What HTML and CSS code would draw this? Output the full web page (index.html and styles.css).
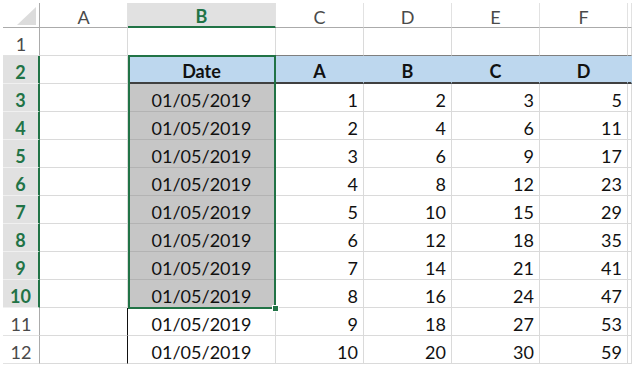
FILE: index.html
```html
<!DOCTYPE html>
<html lang="en">
<head>
    <meta charset="UTF-8">
    <title>Sheet</title>
    <link rel="stylesheet" href="styles.css">
</head>
<body>

<div class="sheet">
  <!-- column headers -->
  <div class="cell corner">
    <svg width="19" height="18" viewBox="0 0 19 18"><polygon points="19,0 19,18 0,18" fill="#dcdcdc"/></svg>
  </div>
  <div class="cell col-head">A</div>
  <div class="cell col-head active">B</div>
  <div class="cell col-head">C</div>
  <div class="cell col-head">D</div>
  <div class="cell col-head">E</div>
  <div class="cell col-head">F</div>
  <div class="cell col-head"></div>

  <!-- row 1 -->
  <div class="cell row-head">1</div>
  <div class="cell"></div>
  <div class="cell above"></div>
  <div class="cell above"></div>
  <div class="cell above"></div>
  <div class="cell above"></div>
  <div class="cell above"></div>
  <div class="cell above"></div>

  <!-- row 2 -->
  <div class="cell row-head active">2</div>
  <div class="cell"></div>
  <div class="cell title">Date</div>
  <div class="cell title">A</div>
  <div class="cell title">B</div>
  <div class="cell title">C</div>
  <div class="cell title">D</div>
  <div class="cell title"></div>

  <!-- rows 3..12 -->
  <div class="cell row-head active">3</div>
  <div class="cell"></div>
  <div class="cell date shade">01/05/2019</div>
  <div class="cell num">1</div><div class="cell num">2</div><div class="cell num">3</div><div class="cell num">5</div>
  <div class="cell"></div>

  <div class="cell row-head active">4</div>
  <div class="cell"></div>
  <div class="cell date shade">01/05/2019</div>
  <div class="cell num">2</div><div class="cell num">4</div><div class="cell num">6</div><div class="cell num">11</div>
  <div class="cell"></div>

  <div class="cell row-head active">5</div>
  <div class="cell"></div>
  <div class="cell date shade">01/05/2019</div>
  <div class="cell num">3</div><div class="cell num">6</div><div class="cell num">9</div><div class="cell num">17</div>
  <div class="cell"></div>

  <div class="cell row-head active">6</div>
  <div class="cell"></div>
  <div class="cell date shade">01/05/2019</div>
  <div class="cell num">4</div><div class="cell num">8</div><div class="cell num">12</div><div class="cell num">23</div>
  <div class="cell"></div>

  <div class="cell row-head active">7</div>
  <div class="cell"></div>
  <div class="cell date shade">01/05/2019</div>
  <div class="cell num">5</div><div class="cell num">10</div><div class="cell num">15</div><div class="cell num">29</div>
  <div class="cell"></div>

  <div class="cell row-head active">8</div>
  <div class="cell"></div>
  <div class="cell date shade">01/05/2019</div>
  <div class="cell num">6</div><div class="cell num">12</div><div class="cell num">18</div><div class="cell num">35</div>
  <div class="cell"></div>

  <div class="cell row-head active">9</div>
  <div class="cell"></div>
  <div class="cell date shade">01/05/2019</div>
  <div class="cell num">7</div><div class="cell num">14</div><div class="cell num">21</div><div class="cell num">41</div>
  <div class="cell"></div>

  <div class="cell row-head active">10</div>
  <div class="cell"></div>
  <div class="cell date shade">01/05/2019</div>
  <div class="cell num">8</div><div class="cell num">16</div><div class="cell num">24</div><div class="cell num">47</div>
  <div class="cell"></div>

  <div class="cell row-head">11</div>
  <div class="cell edge"></div>
  <div class="cell date">01/05/2019</div>
  <div class="cell num">9</div><div class="cell num">18</div><div class="cell num">27</div><div class="cell num">53</div>
  <div class="cell"></div>

  <div class="cell row-head">12</div>
  <div class="cell edge"></div>
  <div class="cell date">01/05/2019</div>
  <div class="cell num">10</div><div class="cell num">20</div><div class="cell num">30</div><div class="cell num">59</div>
  <div class="cell"></div>

  <!-- selected range B2:B10 -->
  <div class="selection"><span class="handle"></span></div>
</div>

</body>
</html>
```

FILE: styles.css
```css
html, body {
  margin: 0;
  background: #fff;
  overflow: hidden;
}

body {
  padding: 3px 0 0 3px;
  font-family: Lato, "Open Sans", sans-serif;
  font-size: 18px;
  color: #111;
}

.sheet {
  position: relative;
  display: grid;
  grid-template-columns: 37px 88px 148px 88px 88px 88px 88px 4px;
  grid-template-rows: 25px repeat(12, 28px);
  width: max-content;
}

.cell {
  box-sizing: border-box;
  display: flex;
  align-items: center;
  padding-top: 4px;
  border-right: 1px solid #dadada;
  border-bottom: 1px solid #dadada;
  white-space: nowrap;
  overflow: hidden;
}

/* headers */
.corner {
  align-items: flex-end;
  justify-content: flex-end;
  padding: 0 3px 2px 0;
  border-right-color: #ababab;
  border-bottom-color: #ababab;
}

.col-head {
  justify-content: center;
  padding-top: 3px;
  color: #4a4a4a;
  border-right-color: #e2e2e2;
  border-bottom-color: #ababab;
}

.col-head.active {
  background: #e1e1e1;
  color: #217346;
  font-weight: 700;
  border-bottom: 2px solid #217346;
}

.row-head {
  justify-content: center;
  color: #4a4a4a;
  border-right-color: #ababab;
  border-bottom-color: #e2e2e2;
}

.row-head.active {
  background: #e1e1e1;
  color: #217346;
  font-weight: 700;
  border-right: 2px solid #217346;
  border-bottom-color: #f0f0f0;
}

/* table body */
.above {
  border-bottom-color: #7f7f7f;
}

.title {
  justify-content: center;
  font-weight: 700;
  background: #bdd7ee;
  border-right-color: #bdd7ee;
  border-bottom: 2px solid #404040;
}

.date {
  justify-content: center;
}

.shade {
  background: #c6c6c6;
  border-bottom-color: #b3b3b3;
}

.num {
  justify-content: flex-end;
  padding-right: 5px;
}

.edge {
  border-right-color: #111;
}

/* selection box over the range */
.selection {
  position: absolute;
  left: 125px;
  top: 52px;
  width: 148px;
  height: 254px;
  box-sizing: border-box;
  border: 2px solid #217346;
  pointer-events: none;
}

.handle {
  position: absolute;
  right: -4px;
  bottom: -4px;
  width: 5px;
  height: 5px;
  background: #217346;
  outline: 1px solid #fff;
}
```
